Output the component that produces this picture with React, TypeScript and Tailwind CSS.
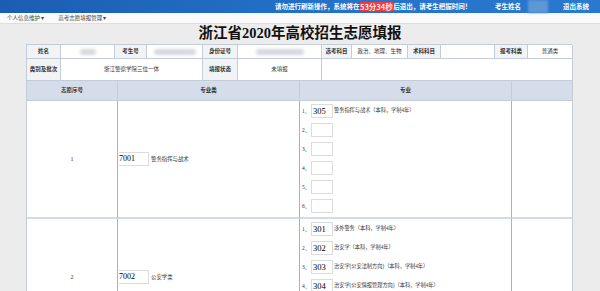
import React from 'react';

const serif = "font-['Liberation_Serif','Noto_Sans_CJK_SC',serif]";
const sans = "font-['Noto_Sans_CJK_SC','Liberation_Sans',sans-serif]";

const Blur = ({ w }: { w: number }) => (
  <div className="h-[6px] rounded-sm bg-[#d5d8dc] blur-[1.5px]" style={{ width: w }} />
);

const CodeBox = ({ code, w = 22 }: { code?: string; w?: number }) => (
  <div
    className={`h-[14px] shrink-0 border border-[#dcdcdc] bg-white pl-[1px] text-[8.5px] leading-[12px] text-black ${serif}`}
    style={{ width: w }}
  >
    {code}
  </div>
);

interface Major {
  code?: string;
  name?: string;
}

interface Choice {
  no: string;
  code: string;
  name: string;
  majors: Major[];
}

const choices: Choice[] = [
  {
    no: '1',
    code: '7001',
    name: '警务指挥与战术',
    majors: [
      { code: '305', name: '警务指挥与战术（本科，学制4年）' },
      {},
      {},
      {},
      {},
      {},
    ],
  },
  {
    no: '2',
    code: '7002',
    name: '公安学类',
    majors: [
      { code: '301', name: '涉外警务（本科，学制4年）' },
      { code: '302', name: '治安学（本科，学制4年）' },
      { code: '303', name: '治安学(公安法制方向)（本科，学制4年）' },
      { code: '304', name: '治安学(公安情报管理方向)（本科，学制4年）' },
      {},
      {},
    ],
  },
];

const cell = 'border-r border-b border-[#c3cdda] flex items-center justify-center';
const label = `${cell} bg-[#f2f3f5] text-[5.5px] font-bold text-[#333]`;
const value = `${cell} bg-white text-[5.5px] text-[#333]`;

export default function App() {
  return (
    <div className="w-[600px] h-[291px] overflow-hidden bg-[#ececec]">
      {/* top bar */}
      <div className={`h-[13px] bg-linear-to-r from-[#1c5db3] via-[#2370c8] to-[#2a79d0] flex items-center text-white text-[6.5px] font-bold whitespace-nowrap ${sans}`}>
        <div className="ml-[275px] flex items-center shrink-0">
          <span>请勿进行刷新操作，系统将在</span>
          <span className="bg-[#f23b3b] text-[#ffe9e9] text-[7.5px] leading-[9px] px-[0.5px]">53分34秒</span>
          <span>后退出，请考生把握时间！</span>
        </div>
        <span className="ml-auto shrink-0">考生姓名</span>
        <div className="ml-[7px] h-[13px] w-[20px] shrink-0 bg-[#5d97d6] blur-[1px]" />
        <span className="ml-[15px] mr-[11px] shrink-0">退出系统</span>
      </div>

      {/* nav */}
      <div className={`h-[11px] bg-[#fafafa] border-b border-[#dedede] flex items-center text-[5.5px] text-[#444] ${sans}`}>
        <span className="ml-[7px]">个人信息维护 ▾</span>
        <span className="ml-[14px]">高考志愿填报管理 ▾</span>
      </div>

      {/* title */}
      <div className={`h-[20px] flex items-center justify-center text-[14.5px] font-bold text-[#111] ${serif}`}>
        浙江省2020年高校招生志愿填报
      </div>

      <div className={`ml-[26px] w-[546px] ${serif}`}>
        {/* info */}
        <div className="grid grid-cols-[34px_54px_32px_56px_35px_84px_30px_56px_33px_54px_33px_45px] grid-rows-[14px_22px] border-l border-t border-[#c3cdda]">
          <div className={label}>姓名</div>
          <div className={value}><Blur w={16} /></div>
          <div className={label}>考生号</div>
          <div className={value}><Blur w={42} /></div>
          <div className={label}>身份证号</div>
          <div className={value}><Blur w={48} /></div>
          <div className={label}>选考科目</div>
          <div className={value}>政治、地理、生物</div>
          <div className={label}>术科科目</div>
          <div className={value}></div>
          <div className={label}>报考科类</div>
          <div className={value}>普通类</div>

          <div className={label}>类别及批次</div>
          <div className={`${value} col-span-3`}>浙江警察学院三位一体</div>
          <div className={label}>填报状态</div>
          <div className={value}>未填报</div>
          <div className={`${value} col-span-6`}></div>
        </div>

        {/* choices */}
        <div className="grid grid-cols-[91px_182px_212px_61px] border-l border-[#c3cdda]">
          <div className={`${cell} h-[20px] bg-[#d5ddeb] text-[5.5px] font-bold text-[#333]`}>志愿序号</div>
          <div className={`${cell} h-[20px] bg-[#d5ddeb] text-[5.5px] font-bold text-[#333]`}>专业类</div>
          <div className={`${cell} h-[20px] bg-[#d5ddeb] text-[5.5px] font-bold text-[#333]`}>专业</div>
          <div className={`${cell} h-[20px] bg-[#d5ddeb]`}></div>

          {choices.map((c) => (
            <React.Fragment key={c.no}>
              <div className="h-[118px] bg-white border-r border-[#aab2bc] border-b-2 border-b-[#d2dbe7] flex items-center justify-center text-[6px] text-[#333]">
                {c.no}
              </div>
              <div className="h-[118px] bg-white border-r border-[#aab2bc] border-b-2 border-b-[#d2dbe7] flex items-center pl-[1px] gap-[2px]">
                <div className="h-[14px] w-[30px] border border-[#dcdcdc] border-l-0 text-[8px] leading-[12px] text-black">{c.code}</div>
                <span className="text-[5.4px] text-[#333]">{c.name}</span>
              </div>
              <div className="h-[118px] bg-white border-r border-[#aab2bc] border-b-2 border-b-[#d2dbe7] flex flex-col justify-between pt-[3px] pb-[4px] pl-[2px]">
                {c.majors.map((m, i) => (
                  <div key={i} className="flex items-center h-[14px]">
                    <span className="w-[9px] text-[5.5px] text-[#333]">{i + 1}、</span>
                    <CodeBox code={m.code} />
                    {m.name && <span className="ml-[1px] text-[5.2px] text-[#333] whitespace-nowrap">{m.name}</span>}
                  </div>
                ))}
              </div>
              <div className="h-[118px] bg-white border-r border-[#c3cdda] border-b-2 border-b-[#d2dbe7]"></div>
            </React.Fragment>
          ))}
        </div>
      </div>
    </div>
  );
}
